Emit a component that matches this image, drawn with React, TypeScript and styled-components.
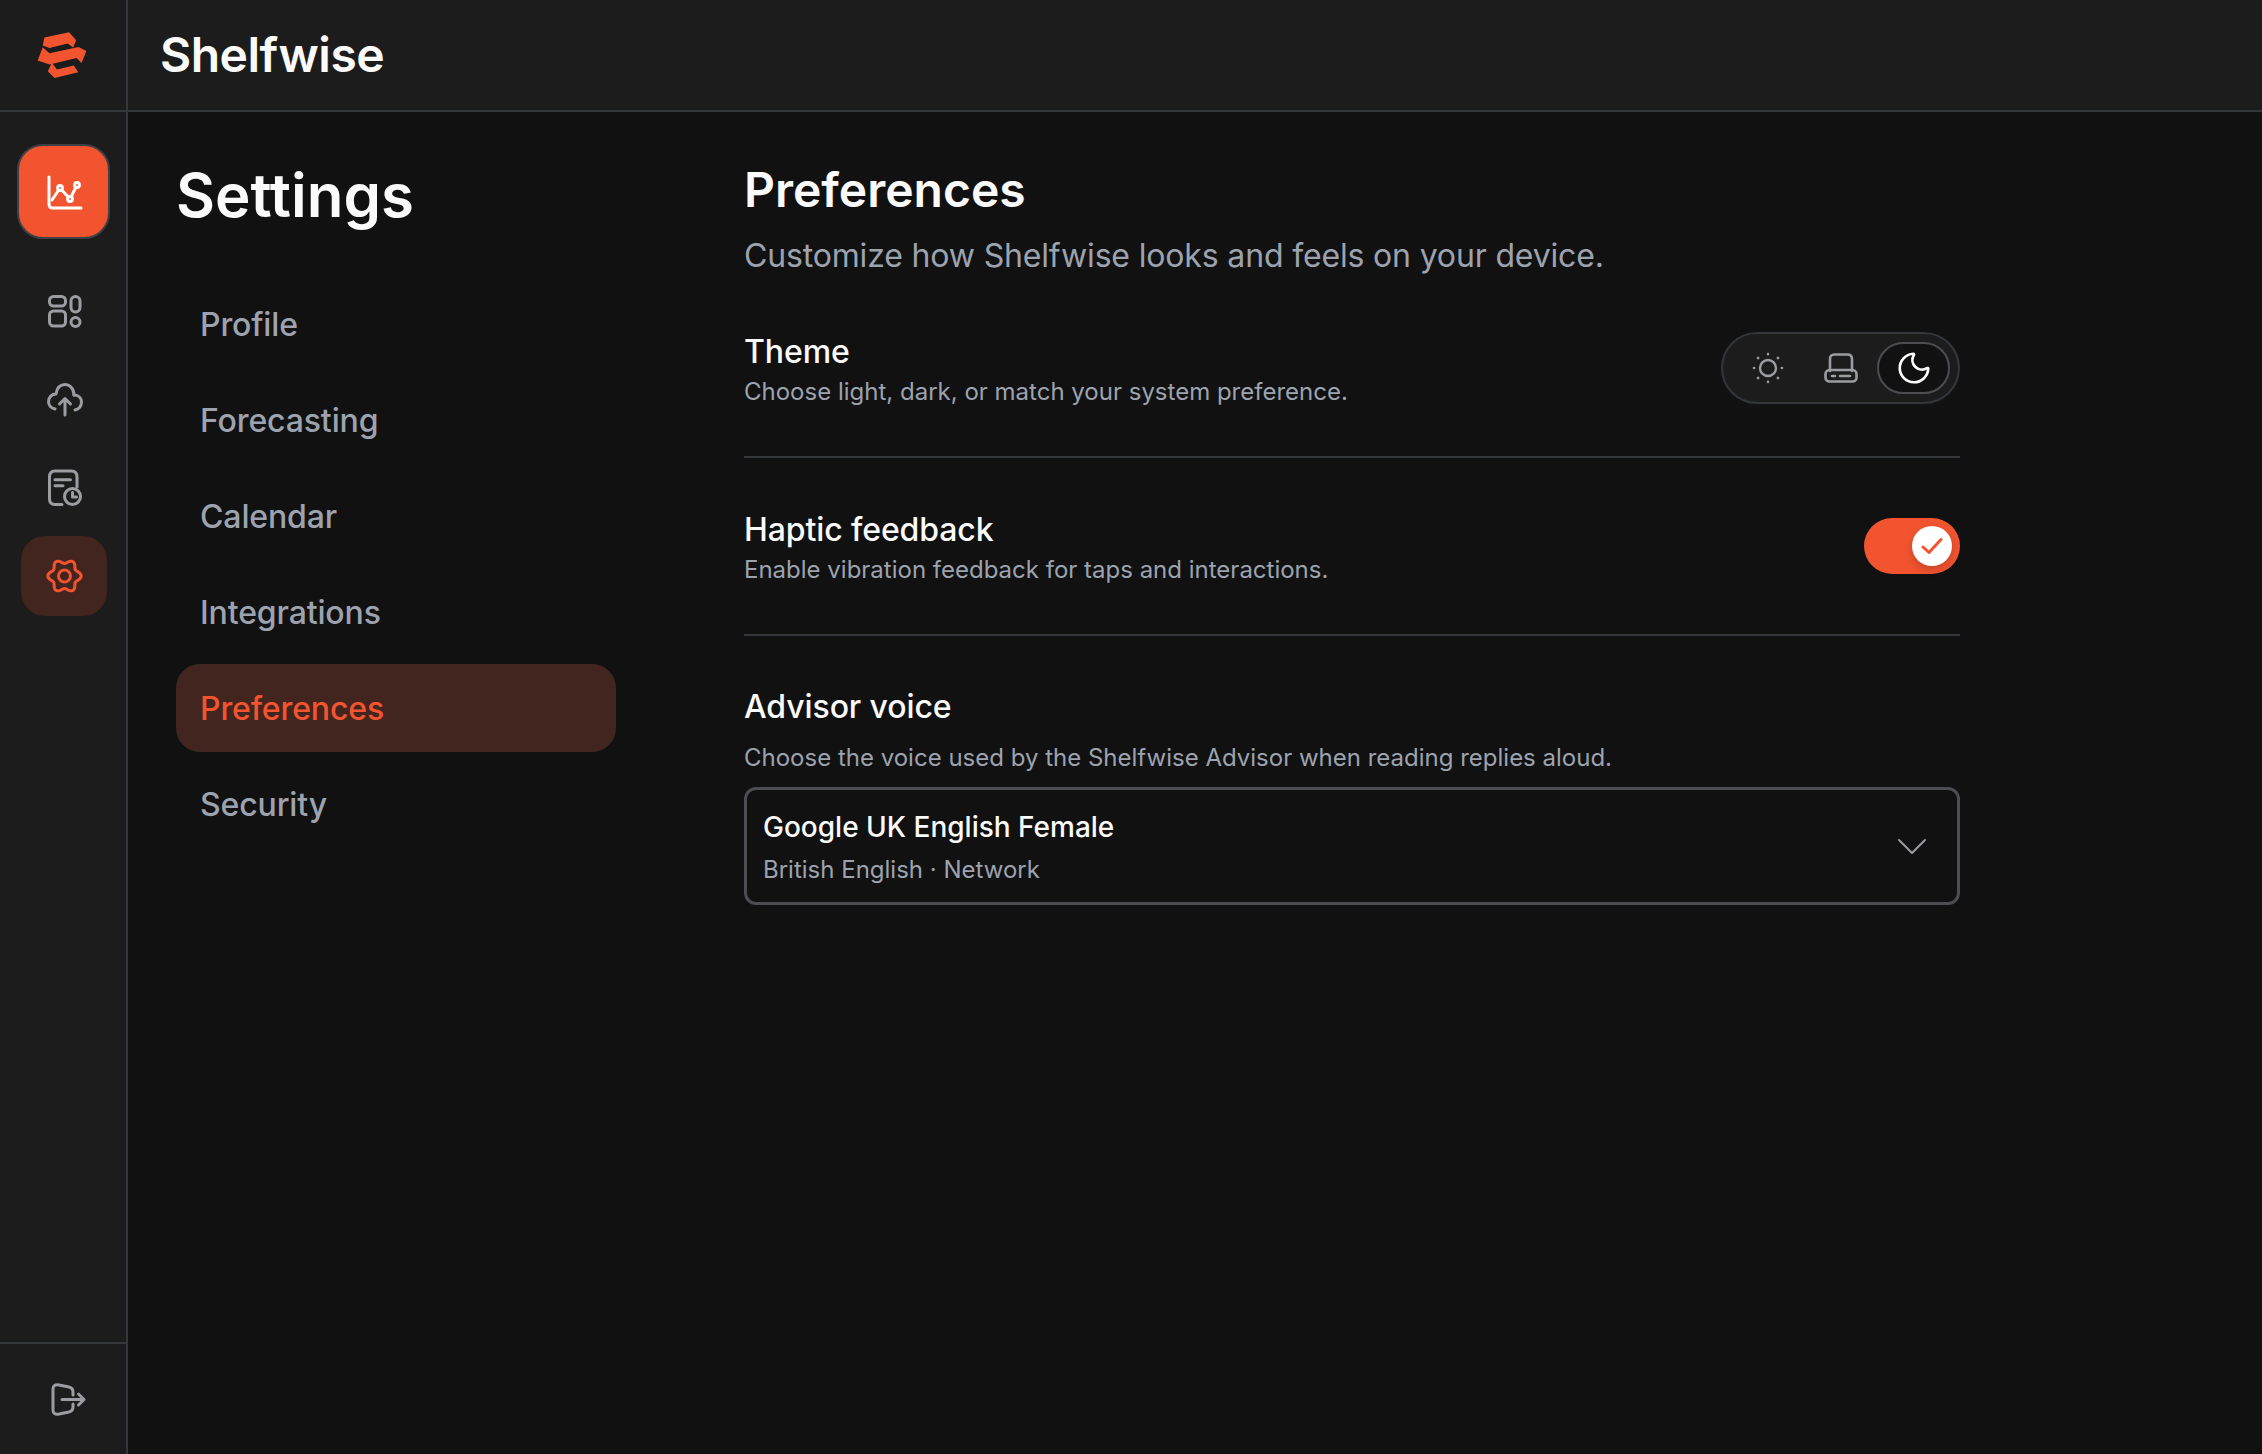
import React from 'react';
import styled, { createGlobalStyle } from 'styled-components';
import { Moon } from 'lucide-react';

const accent = '#f25430';
const line = '#33363b';
const muted = '#9ca3af';
const iconGray = '#9b9da3';

const GlobalStyle = createGlobalStyle`
  html, body {
    margin: 0;
    padding: 0;
    background: #111111;
  }
  * {
    box-sizing: border-box;
  }
  body {
    font-family: Inter, "Noto Sans", sans-serif;
    color: #fafafa;
  }
`;

const Page = styled.div`
  width: 2262px;
  height: 1454px;
  display: flex;
  flex-direction: column;
  overflow: hidden;
`;

const TopBar = styled.header`
  height: 112px;
  flex: none;
  display: flex;
  background: #1c1c1c;
  border-bottom: 2px solid ${line};
`;

const LogoCell = styled.div`
  width: 128px;
  display: flex;
  align-items: center;
  justify-content: center;
  border-right: 2px solid ${line};
  padding-right: 2px;
`;

const Brand = styled.div`
  padding: 0 0 1px 32px;
  display: flex;
  align-items: center;
  font-size: 48px;
  font-weight: 600;
  letter-spacing: -0.5px;
  color: #fafafa;
`;

const Body = styled.div`
  flex: 1;
  display: flex;
  min-height: 0;
`;

const Rail = styled.aside`
  width: 128px;
  flex: none;
  display: flex;
  flex-direction: column;
  background: #1c1c1c;
  border-right: 2px solid ${line};
`;

const RailNav = styled.nav`
  flex: 1;
  display: flex;
  flex-direction: column;
  align-items: center;
  padding-top: 32px;
  gap: 8px;
`;

const PrimaryButton = styled.button`
  width: 93px;
  height: 95px;
  margin-bottom: 25px;
  display: flex;
  align-items: center;
  justify-content: center;
  background: ${accent};
  border: 2px solid #3f4147;
  border-radius: 26px;
  color: #ffffff;
  padding: 0 0 0 3px;
`;

const RailItem = styled.button<{ $active?: boolean }>`
  width: 86px;
  height: 80px;
  flex: none;
  display: flex;
  align-items: center;
  justify-content: center;
  padding: 0 0 0 2px;
  margin-left: 1px;
  border: 0;
  border-radius: 24px;
  background: ${(p) => (p.$active ? '#42251e' : 'transparent')};
  color: ${(p) => (p.$active ? accent : iconGray)};
`;

const RailFooter = styled.div`
  height: 112px;
  flex: none;
  display: flex;
  align-items: center;
  justify-content: center;
  padding: 2px 0 0 12px;
  border-top: 2px solid ${line};
  color: ${iconGray};
`;

const Main = styled.main`
  flex: 1;
  display: flex;
  padding: 0 302px 0 48px;
  gap: 128px;
`;

const SideColumn = styled.div`
  width: 440px;
  flex: none;
`;

const SettingsTitle = styled.h1`
  margin: 48px 0 0;
  height: 70px;
  line-height: 70px;
  font-size: 60px;
  font-weight: 600;
  color: #fafafa;
`;

const SideNav = styled.nav`
  margin-top: 50px;
  display: flex;
  flex-direction: column;
  gap: 8px;
`;

const SideItem = styled.a<{ $active?: boolean }>`
  height: 88px;
  display: flex;
  align-items: center;
  padding-left: 24px;
  border-radius: 24px;
  font-size: 32px;
  font-weight: 500;
  letter-spacing: -0.13px;
  background: ${(p) => (p.$active ? '#42251e' : 'transparent')};
  color: ${(p) => (p.$active ? accent : muted)};
`;

const Content = styled.section`
  flex: 1;
  min-width: 0;
  padding-top: 48px;
`;

const PageTitle = styled.h2`
  margin: 0;
  height: 60px;
  line-height: 60px;
  font-size: 48px;
  font-weight: 600;
  color: #fafafa;
`;

const PageLead = styled.p`
  margin: 16px 0 0;
  line-height: 40px;
  font-size: 32px;
  letter-spacing: -0.16px;
  color: ${muted};
`;

const SettingRow = styled.div<{ $first?: boolean }>`
  display: flex;
  justify-content: space-between;
  align-items: center;
  padding: ${(p) => (p.$first ? '54px' : '50px')} 0 50px;
  border-bottom: 2px solid ${line};
`;

const SettingText = styled.div`
  display: flex;
  flex-direction: column;
  gap: 6px;
  padding-top: 2px;
`;

const SettingName = styled.div`
  line-height: 40px;
  font-size: 32px;
  font-weight: 500;
  letter-spacing: -0.1px;
  color: #fafafa;
`;

const SettingHint = styled.div`
  line-height: 28px;
  font-size: 24px;
  color: ${muted};
`;

const ThemeSwitch = styled.div`
  width: 239px;
  height: 72px;
  display: flex;
  align-items: center;
  padding: 0 8px;
  border: 2px solid ${line};
  border-radius: 36px;
  background: #1c1c1c;
  box-shadow: 0 2px 16px rgba(255, 255, 255, 0.02);
`;

const ThemeOption = styled.button<{ $active?: boolean }>`
  flex: 1;
  height: 52px;
  display: flex;
  align-items: center;
  justify-content: center;
  padding: 0;
  border: 2px solid ${(p) => (p.$active ? '#4b4d52' : 'transparent')};
  border-radius: 26px;
  background: ${(p) => (p.$active ? '#111111' : 'transparent')};
  color: ${(p) => (p.$active ? '#ffffff' : iconGray)};
`;

const Toggle = styled.div`
  width: 96px;
  height: 56px;
  display: flex;
  align-items: center;
  justify-content: flex-end;
  padding-right: 8px;
  border-radius: 28px;
  background: ${accent};
`;

const ToggleKnob = styled.div`
  width: 40px;
  height: 40px;
  display: flex;
  align-items: center;
  justify-content: center;
  border-radius: 50%;
  background: #ffffff;
  color: ${accent};
  box-shadow: 0 4px 10px rgba(0, 0, 0, 0.18);
`;

const VoiceBlock = styled.div`
  padding-top: 51px;
  display: flex;
  flex-direction: column;
`;

const VoiceHint = styled(SettingHint)`
  margin-top: 17px;
`;

const VoiceSelect = styled.div`
  margin-top: 15px;
  height: 118px;
  display: flex;
  align-items: center;
  justify-content: space-between;
  padding: 0 30px 0 16px;
  border: 3px solid #4b4d52;
  border-radius: 12px;
  color: ${iconGray};
`;

const VoiceLabel = styled.div`
  padding-top: 2px;
`;

const VoiceName = styled.div`
  line-height: 36px;
  font-size: 28px;
  font-weight: 500;
  color: #fafafa;
`;

const VoiceMeta = styled.div`
  margin-top: 9px;
  line-height: 32px;
  font-size: 24px;
  color: ${muted};
`;

const stroke = {
  fill: 'none',
  stroke: 'currentColor',
  strokeWidth: 3,
  strokeLinecap: 'round' as const,
  strokeLinejoin: 'round' as const,
};

// six soft lobes round the settings cog
const gearPath = () => {
  const pts: string[] = [];
  for (let i = 0; i < 96; i++) {
    const a = (i / 96) * Math.PI * 2;
    const r = 14.6 + 2.1 * Math.cos(6 * a);
    pts.push(`${(18.5 + r * Math.cos(a)).toFixed(2)} ${(17 + r * Math.sin(a)).toFixed(2)}`);
  }
  return `M${pts.join(' L')} Z`;
};

const Logo = () => (
  <svg width="52" height="48" viewBox="112 96 150 142" fill={accent}>
    <path d="M135 115 L208 100 L229 123 L220 145 L204 133 L150 146 L130 139 Z" />
    <path d="M115 183 L130 144 L150 162 L236 143 L259 155 L245 191 L230 176 L150 195 Z" />
    <path d="M145 215 L157 190 L172 210 L222 198 L235 218 L165 235 Z" />
  </svg>
);

const ChartIcon = () => (
  <svg width="36" height="36" viewBox="0 0 36 36" {...stroke}>
    <path d="M2 3 V30 Q2 34 6 34 H34" />
    <path d="M5 26 L13 14 L23 25 L30 11" />
    <circle cx="13" cy="14" r="2.4" fill={accent} />
    <circle cx="23" cy="25" r="2.4" fill={accent} />
    <circle cx="30" cy="11" r="2.4" fill={accent} />
  </svg>
);

const GridIcon = () => (
  <svg width="36" height="36" viewBox="0 0 36 36" {...stroke}>
    <rect x="2.500" y="2.500" width="16" height="9.500" rx="4" />
    <rect x="2.500" y="17" width="16" height="15" rx="4" />
    <rect x="24" y="2.500" width="9" height="15.500" rx="4.500" />
    <circle cx="28.500" cy="28" r="4.500" />
  </svg>
);

const CloudIcon = () => (
  <svg width="36" height="34" viewBox="0 0 36 34" {...stroke}>
    <path d="M8 26 C3.500 25 1.500 21.500 1.500 18.500 C1.500 14 5 11 9 11 C10 5 13.500 1.500 18 1.500 C23 1.500 27 6 27 12" />
    <path d="M27 12 C32 12 34.500 15.500 34.500 19 C34.500 23 32 26 28 27" />
    <path d="M18 32 V15.500 M12.500 21 L18 15.500 L23.500 21" />
  </svg>
);

const ReportIcon = () => (
  <svg width="36" height="38" viewBox="0 0 36 38" {...stroke}>
    <path d="M15 35.500 H8 Q2.500 35.500 2.500 30 V8 Q2.500 2 8 2 H24.500 Q30 2 30 8 V18" />
    <path d="M8 10.700 H23.500 M8 16.700 H16" />
    <circle cx="25.500" cy="27.500" r="8" />
    <path d="M25.500 23.500 V28 H29.500" />
  </svg>
);

const GearIcon = () => (
  <svg width="37" height="34" viewBox="0 0 37 34" {...stroke}>
    <path d={gearPath()} />
    <circle cx="18.500" cy="17" r="6" />
  </svg>
);

const LogoutIcon = () => (
  <svg width="36" height="34" viewBox="0 0 36 34" {...stroke}>
    <path d="M22 12 V9 Q22 5 18 4 L8 2 Q2 1 2 6 V27 Q2 32 8 31 L18 29 Q22 28 22 24 V21" />
    <path d="M11 16.500 H33 M27.500 11 L33 16.500 L27.500 22" />
  </svg>
);

const SunIcon = () => (
  <svg width="32" height="32" viewBox="0 0 32 32" fill="none" stroke="currentColor" strokeLinecap="round">
    <circle cx="16" cy="16" r="8" strokeWidth="2.400" />
    <path
      d="M16 2 V2.100 M16 29.900 V30 M2 16 H2.100 M29.900 16 H30 M6 6 L6.100 6.100 M25.900 25.900 L26 26 M6 26 L6.100 25.900 M25.900 6.100 L26 6"
      strokeWidth="2.600"
    />
  </svg>
);

const DeviceIcon = () => (
  <svg width="34" height="30" viewBox="0 0 34 30" {...stroke} strokeWidth="2.600">
    <path d="M6 18 V6 Q6 1.500 10.500 1.500 H23.500 Q28 1.500 28 6 V18" />
    <rect x="1.500" y="17" width="31" height="11.500" rx="4" />
    <path d="M8 23 H11 M16 23 H26" />
  </svg>
);

const CheckIcon = () => (
  <svg width="22" height="18" viewBox="0 0 22 18" {...stroke}>
    <path d="M2 10 L8 15.500 L20 2.500" />
  </svg>
);

const ChevronIcon = () => (
  <svg width="30" height="18" viewBox="0 0 30 18" {...stroke} strokeWidth="2">
    <path d="M2 3 L15 16 L28 3" />
  </svg>
);

const sideItems = ['Profile', 'Forecasting', 'Calendar', 'Integrations', 'Preferences', 'Security'];

export default function App() {
  return (
    <Page>
      <GlobalStyle />
      <TopBar>
        <LogoCell>
          <Logo />
        </LogoCell>
        <Brand>Shelfwise</Brand>
      </TopBar>
      <Body>
        <Rail>
          <RailNav>
            <PrimaryButton>
              <ChartIcon />
            </PrimaryButton>
            <RailItem>
              <GridIcon />
            </RailItem>
            <RailItem>
              <CloudIcon />
            </RailItem>
            <RailItem>
              <ReportIcon />
            </RailItem>
            <RailItem $active>
              <GearIcon />
            </RailItem>
          </RailNav>
          <RailFooter>
            <LogoutIcon />
          </RailFooter>
        </Rail>
        <Main>
          <SideColumn>
            <SettingsTitle>Settings</SettingsTitle>
            <SideNav>
              {sideItems.map((item) => (
                <SideItem key={item} $active={item === 'Preferences'}>
                  {item}
                </SideItem>
              ))}
            </SideNav>
          </SideColumn>
          <Content>
            <PageTitle>Preferences</PageTitle>
            <PageLead>Customize how Shelfwise looks and feels on your device.</PageLead>
            <SettingRow $first>
              <SettingText>
                <SettingName>Theme</SettingName>
                <SettingHint>Choose light, dark, or match your system preference.</SettingHint>
              </SettingText>
              <ThemeSwitch>
                <ThemeOption>
                  <SunIcon />
                </ThemeOption>
                <ThemeOption>
                  <DeviceIcon />
                </ThemeOption>
                <ThemeOption $active>
                  <Moon size={38} strokeWidth={1.7} />
                </ThemeOption>
              </ThemeSwitch>
            </SettingRow>
            <SettingRow>
              <SettingText>
                <SettingName>Haptic feedback</SettingName>
                <SettingHint>Enable vibration feedback for taps and interactions.</SettingHint>
              </SettingText>
              <Toggle>
                <ToggleKnob>
                  <CheckIcon />
                </ToggleKnob>
              </Toggle>
            </SettingRow>
            <VoiceBlock>
              <SettingName>Advisor voice</SettingName>
              <VoiceHint>Choose the voice used by the Shelfwise Advisor when reading replies aloud.</VoiceHint>
              <VoiceSelect>
                <VoiceLabel>
                  <VoiceName>Google UK English Female</VoiceName>
                  <VoiceMeta>British English · Network</VoiceMeta>
                </VoiceLabel>
                <ChevronIcon />
              </VoiceSelect>
            </VoiceBlock>
          </Content>
        </Main>
      </Body>
    </Page>
  );
}
